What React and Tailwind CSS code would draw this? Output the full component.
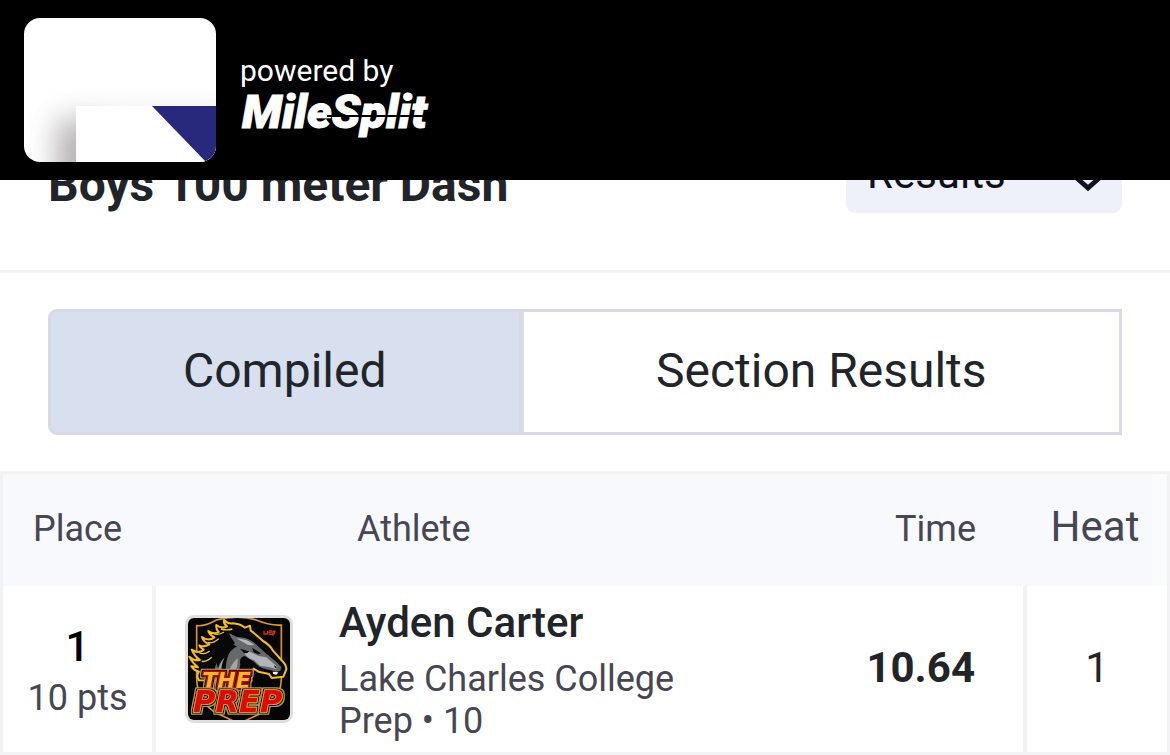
const results = [
  {
    place: 1,
    points: '10 pts',
    name: 'Ayden Carter',
    team: 'Lake Charles College Prep • 10',
    time: '10.64',
    heat: 1,
  },
];

function MeetLogo() {
  return (
    <svg viewBox="0 0 192 144" className="h-36 w-48 shrink-0 rounded-2xl" role="img" aria-label="Meet logo">
      <defs>
        <filter id="soft" x="-50%" y="-50%" width="200%" height="200%">
          <feGaussianBlur stdDeviation="15" />
        </filter>
      </defs>
      <rect width="192" height="144" fill="#fff" />
      <path d="M34 102H210V110H74V200H34Z" fill="#7c7478" opacity="0.6" filter="url(#soft)" />
      <rect x="52" y="88" width="140" height="56" fill="#fff" />
      <path d="M128 88H192V144H182Z" fill="#28287c" />
    </svg>
  );
}

function MileSplitLogo() {
  return (
    <svg viewBox="0 0 216 60" className="h-[60px] w-[216px]" role="img" aria-label="MileSplit">
      <text
        x="2"
        y="39"
        fontFamily="Roboto, sans-serif"
        fontWeight="900"
        fontStyle="italic"
        fontSize="47"
        fill="#fff"
        stroke="#fff"
        strokeWidth="1"
      >
        MileSplit
      </text>
      <path d="M87 27H192" stroke="#000" strokeWidth="2" />
    </svg>
  );
}

function TeamLogo() {
  return (
    <svg viewBox="27 27 306 306" className="size-full" role="img" aria-label="The Prep">
      <defs>
        <filter id="wordOutline" x="-20%" y="-40%" width="140%" height="180%">
          <feMorphology in="SourceAlpha" operator="dilate" radius="3" result="inner" />
          <feFlood floodColor="#1a0a08" />
          <feComposite in2="inner" operator="in" result="dark" />
          <feMorphology in="SourceAlpha" operator="dilate" radius="5" result="outer" />
          <feFlood floodColor="#a8976a" />
          <feComposite in2="outer" operator="in" result="light" />
          <feMerge>
            <feMergeNode in="light" />
            <feMergeNode in="dark" />
            <feMergeNode in="SourceGraphic" />
          </feMerge>
        </filter>
      </defs>
      <rect x="27" y="27" width="306" height="306" fill="#050505" />
      <path
        d="M53 205V50Q80 52 112 33Q178 16 232 33Q270 50 307 48V205Q307 275 252 310L180 344L108 310Q53 275 53 205Z"
        fill="none"
        stroke="#d8952b"
        strokeWidth="5"
      />
      <path
        d="M60 214Q50 200 60 188Q44 184 37 172L57 175Q40 162 31 143Q47 157 63 153Q45 140 38 122Q58 136 74 122Q64 117 61 109Q76 116 91 106Q73 99 69 84Q88 98 106 85Q90 76 88 66Q104 78 119 69Q110 60 112 48Q127 60 144 52Q133 44 135 33Q146 45 161 43Q183 44 198 56L213 50L215 65Q236 80 252 96Q272 107 282 125L307 153Q323 168 322 181L313 203L278 207L270 195L238 188L224 179L216 198L218 215Z"
        fill="#080808"
        stroke="#f4bd22"
        strokeWidth="6"
        strokeLinejoin="round"
      />
      <path
        d="M68 157Q82 160 98 145M61 132Q77 138 92 126M86 101Q104 103 119 89M105 74Q119 80 135 69M126 60Q143 65 160 60"
        fill="none"
        stroke="#f1c42c"
        strokeWidth="4"
      />
      <path
        d="M107 198Q104 174 119 151Q133 133 151 120L168 102Q157 89 149 72L172 83L194 86Q218 91 233 108L262 134L288 155L307 174L304 186L289 190L276 184L261 181L241 173L223 157L197 141Q179 145 184 166L177 198Z"
        fill="#66686c"
      />
      <path d="M171 88Q207 90 227 109L207 108L190 98ZM202 123L239 141L262 145L296 174L291 180L269 174L243 170L225 154L210 148L197 136Z" fill="#b3b4b7" />
      <path d="M119 195Q115 162 146 137Q130 170 139 196ZM149 195Q152 169 176 147Q178 176 163 195Z" fill="#a4a5a9" />
      <path d="M109 151Q126 124 157 105L174 112Q151 124 145 146Q137 174 143 198L129 196Q122 177 137 145Q123 158 117 178ZM183 119L211 127L204 133L195 132ZM219 116L246 133L239 136L224 130Z" fill="#090909" />
      <path d="M285 169L295 175L288 177ZM277 184L293 189L302 185L294 196L285 195Z" fill="#111" />
      <path d="M281 188L298 190L292 197L283 195Z" fill="#fff" />
      <g fontFamily="'DejaVu Sans', sans-serif" fontWeight="700" fontStyle="italic" strokeLinejoin="round" paintOrder="stroke">
        <text x="70" y="238" fontSize="66" fill="#ffb629" stroke="#b80f0b" strokeWidth="8" filter="url(#wordOutline)">
          THE
        </text>
        <text x="42" y="308" fontSize="92" fill="#d80f0c" stroke="#f2a126" strokeWidth="5" filter="url(#wordOutline)">
          PREP
        </text>
      </g>
      <path d="M255 65V75H266V66M269 66H279M269 71H278M270 76H280M282 66V80M282 67H288L286 74H282" fill="none" stroke="#d93216" strokeWidth="4" />
    </svg>
  );
}

export default function App() {
  return (
    <div className="min-h-screen bg-white font-['Roboto',sans-serif] text-[#212529]">
      <header className="fixed inset-x-0 top-0 z-10 flex h-[180px] items-center gap-6 bg-black px-6 text-white">
        <MeetLogo />
        <div className="flex flex-col pt-[22px]">
          <span className="text-[30px] leading-9">powered by</span>
          <MileSplitLogo />
        </div>
      </header>

      <main className="pt-[135px]">
        <section className="flex items-end justify-between border-b-[3px] border-[#f3f3f4] px-12 pb-[57px]">
          <h1 className="text-[48px] leading-[57px] font-bold">Boys 100 meter Dash</h1>
          <div className="grid w-[276px] items-center">
            <select
              aria-label="View"
              className="col-start-1 row-start-1 h-[78px] w-full appearance-none rounded-[9px] bg-[#eef1fa] px-[21px] text-[42px] leading-[48px] text-[#101020]"
            >
              <option>Results</option>
              <option>Entries</option>
            </select>
            <svg
              viewBox="0 0 36 24"
              className="pointer-events-none col-start-1 row-start-1 mt-3 mr-4 h-6 w-9 justify-self-end"
              fill="none"
              stroke="#101020"
              strokeWidth="5"
              aria-hidden="true"
            >
              <path d="M0 4L18 20L36 4" />
            </svg>
          </div>
        </section>

        <div className="flex px-12 py-9 text-[48px] leading-[60px]">
          <button type="button" className="w-[44%] rounded-l-[9px] border-[3px] border-r-2 border-[#d8d9e2] bg-[#d8dfee] pt-[29px] pb-[31px]">
            Compiled
          </button>
          <button type="button" className="flex-1 border-[3px] border-[#d8d9e2] bg-white pt-[29px] pb-[31px]">
            Section Results
          </button>
        </div>

        <table className="w-full table-fixed border-separate border-spacing-0 border-[3px] border-[#f3f3f5]">
          <colgroup>
            <col className="w-[153px]" />
            <col />
            <col className="w-[240px]" />
            <col className="w-[140px]" />
          </colgroup>
          <thead className="bg-[#f8f9fd] text-[36px] leading-[42px] text-[#474653]">
            <tr className="h-28">
              <th className="pr-1 pb-[2px] font-normal">Place</th>
              <th className="pb-[2px] pl-[201px] text-left font-normal">Athlete</th>
              <th className="pr-[51px] pb-[2px] text-right font-normal">Time</th>
              <th className="bg-[linear-gradient(to_left,#fafbfd_15px,transparent_15px)] pr-1 pb-[6px] text-[42px] font-normal">Heat</th>
            </tr>
          </thead>
          <tbody>
            {results.map((r) => (
              <tr key={r.place} className="h-[166px]">
                <td className="border-r-4 border-[#f3f3f5] pt-1 text-center">
                  <div className="text-[42px] leading-[54px] font-medium text-black">{r.place}</div>
                  <div className="text-[36px] leading-[48px] text-[#474653]">{r.points}</div>
                </td>
                <td className="pl-[29px]">
                  <div className="flex items-center gap-[46px]">
                    <div className="size-[108px] shrink-0 overflow-hidden rounded-[9px] border-[3px] border-[#dedede]">
                      <TeamLogo />
                    </div>
                    <div className="max-w-[380px]">
                      <a href="#athlete" className="block text-[42px] leading-[54px] font-medium">
                        {r.name}
                      </a>
                      <div className="pt-2 text-[36px] leading-[42px] text-[#474653]">{r.team}</div>
                    </div>
                  </div>
                </td>
                <td className="border-r-4 border-[#f3f3f5] pr-12 pb-1 text-right text-[42px] font-bold">{r.time}</td>
                <td className="pb-1 text-center text-[42px]">{r.heat}</td>
              </tr>
            ))}
          </tbody>
        </table>
      </main>
    </div>
  );
}
